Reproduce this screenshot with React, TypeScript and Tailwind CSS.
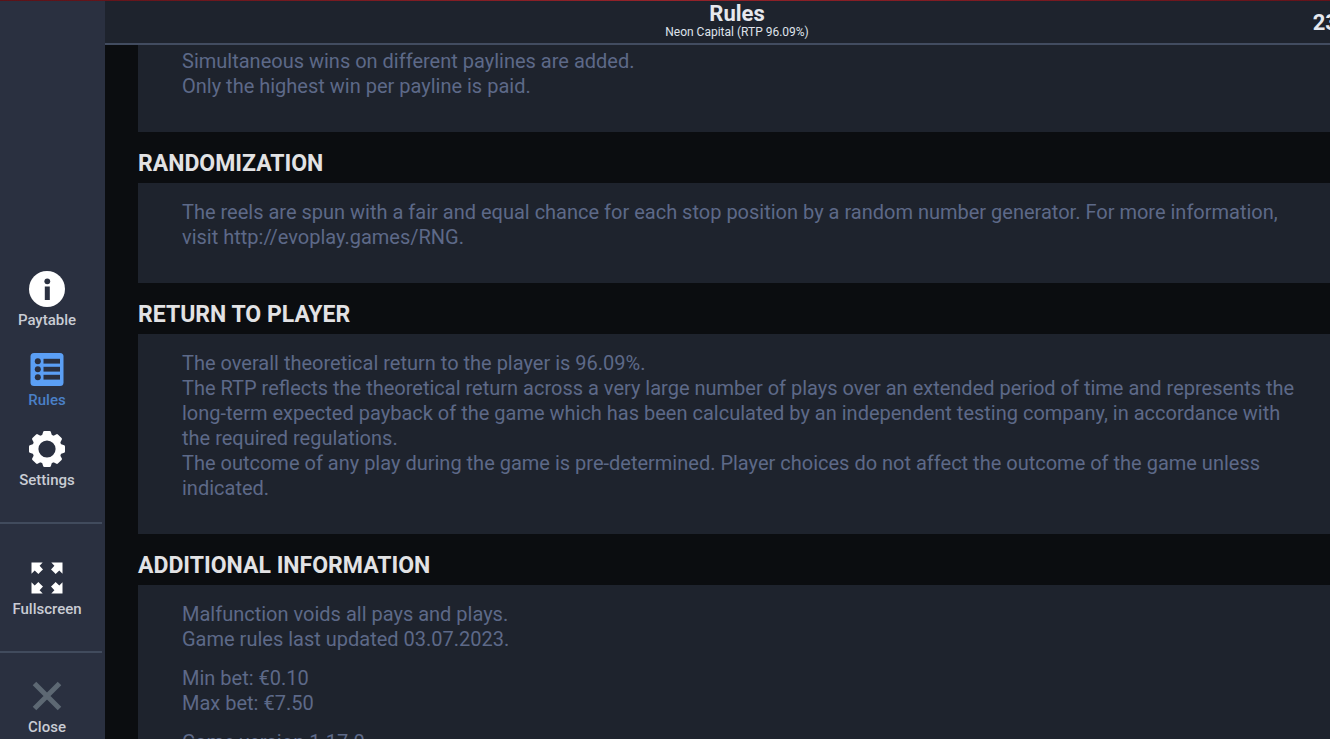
import React from "react";
import type { ReactNode } from "react";

const InfoIcon = () => (
  <svg width="36" height="36" viewBox="0 0 36 36" aria-hidden="true">
    <circle cx="18" cy="18" r="18" fill="#ffffff" />
    <circle cx="18.3" cy="10.3" r="2.9" fill="#2a3040" />
    <rect x="15.8" y="15.5" width="5" height="13.5" fill="#2a3040" />
  </svg>
);

const RulesIcon = () => (
  <svg width="34" height="34" viewBox="0 0 34 34" aria-hidden="true">
    <rect x="0.5" y="1" width="33" height="33" rx="3.5" fill="#5b9ff5" />
    <g fill="#2a3040">
      <circle cx="7.8" cy="9.2" r="3" />
      <circle cx="7.8" cy="17.2" r="3" />
      <circle cx="7.8" cy="25.2" r="3" />
      <rect x="13.5" y="6.8" width="16.5" height="4.8" />
      <rect x="13.5" y="14.8" width="16.5" height="4.8" />
      <rect x="13.5" y="22.8" width="16.5" height="4.8" />
    </g>
  </svg>
);

const teeth = [0, 45, 90, 135, 180, 225, 270, 315];

const SettingsIcon = () => (
  <svg width="36" height="36" viewBox="0 0 36 36" aria-hidden="true">
    <circle cx="18" cy="18" r="11.7" fill="none" stroke="#ffffff" strokeWidth="6.2" />
    {teeth.map((angle) => (
      <path
        key={angle}
        d="M12.6 6 L14.2 0.8 Q14.5 0 15.4 0 H20.6 Q21.5 0 21.8 0.8 L23.4 6 Z"
        fill="#ffffff"
        transform={`rotate(${angle} 18 18)`}
      />
    ))}
  </svg>
);

const corners = [0, 90, 180, 270];

const FullscreenIcon = () => (
  <svg width="32" height="32" viewBox="0 0 32 32" aria-hidden="true">
    {corners.map((angle) => (
      <path
        key={angle}
        d="M0.5 0.5 H11.7 L8.6 3.7 L12 7.4 L10.6 8.8 L8.8 10.6 L7.4 12 L3.7 8.6 L0.5 11.7 Z"
        fill="#ffffff"
        transform={`rotate(${angle} 16 16)`}
      />
    ))}
  </svg>
);

const CloseIcon = () => (
  <svg width="30" height="30" viewBox="0 0 30 30" aria-hidden="true">
    <path d="M2.5 2.5 L27.5 27.5 M27.5 2.5 L2.5 27.5" stroke="#5d6873" strokeWidth="5" />
  </svg>
);

type NavButtonProps = {
  icon: ReactNode;
  label: string;
  active?: boolean;
};

const NavButton = ({ icon, label, active }: NavButtonProps) => (
  <button
    type="button"
    className={`flex w-[94px] flex-col items-center gap-[3px] text-[15px] leading-5 font-medium ${
      active ? "text-[#4a80c8]" : "text-[#c9ccd4]"
    }`}
  >
    <span className="flex h-9 items-center justify-center">{icon}</span>
    {label}
  </button>
);

const Divider = () => <hr className="w-[102px] border-t-2 border-[#414b5d]" />;

type SectionProps = {
  title: string;
  children: ReactNode;
};

const Section = ({ title, children }: SectionProps) => (
  <section>
    <h2 className="pt-[18px] pb-[5px] text-[23px] leading-7 font-bold text-[#e2e2e4]">{title}</h2>
    <div className="bg-[#1e232d] pt-[17px] pb-[33px] pl-11">{children}</div>
  </section>
);

export default function App() {
  return (
    <div className="flex h-screen flex-col overflow-hidden bg-[#0b0d10] font-['Roboto',sans-serif]">
      <div className="h-px shrink-0 bg-linear-to-r from-[#5c1218] via-[#96232a] to-[#64131a]" />
      <div className="flex min-h-0 flex-1">
        <nav className="flex w-[105px] shrink-0 flex-col justify-end bg-[#2a3040] pb-0.5">
          <div className="flex flex-col gap-[21px] pb-8">
            <NavButton icon={<InfoIcon />} label="Paytable" />
            <NavButton icon={<RulesIcon />} label="Rules" active />
            <NavButton icon={<SettingsIcon />} label="Settings" />
          </div>
          <Divider />
          <div className="pt-9 pb-8">
            <NavButton icon={<FullscreenIcon />} label="Fullscreen" />
          </div>
          <Divider />
          <div className="pt-[25px]">
            <NavButton icon={<CloseIcon />} label="Close" />
          </div>
        </nav>

        {/* the panel runs a little past the right edge of the window */}
        <div className="flex w-[calc(100%-66px)] shrink-0 flex-col">
          <header className="grid h-11 shrink-0 grid-cols-[1fr_auto_1fr] items-center border-b-2 border-[#424c60] bg-[#1e232d]">
            <span />
            <div className="pt-px pb-[5px] text-center">
              <h1 className="text-[22px] leading-6 font-bold text-[#e6e8ee]">Rules</h1>
              <p className="text-xs leading-3 text-[#dfe2ea]">Neon Capital (RTP 96.09%)</p>
            </div>
            <span className="pr-[31px] text-right text-[22px] font-bold text-[#e6e8ee]">23</span>
          </header>

          <main className="min-h-0 flex-1 overflow-hidden pl-[33px] text-[20px] leading-[25px] text-[#5d6988]">
            <div className="bg-[#1e232d] pt-1 pb-[33px] pl-11">
              <p>Simultaneous wins on different paylines are added.</p>
              <p>Only the highest win per payline is paid.</p>
            </div>

            <Section title="RANDOMIZATION">
              <p>
                The reels are spun with a fair and equal chance for each stop position by a random
                number generator. For more information,
                <br />
                visit http://evoplay.games/RNG.
              </p>
            </Section>

            <Section title="RETURN TO PLAYER">
              <p>The overall theoretical return to the player is 96.09%.</p>
              <p>
                The RTP reflects the theoretical return across a very large number of plays over an
                extended period of time and represents the
                <br />
                long-term expected payback of the game which has been calculated by an independent
                testing company, in accordance with
                <br />
                the required regulations.
              </p>
              <p>
                The outcome of any play during the game is pre-determined. Player choices do not
                affect the outcome of the game unless
                <br />
                indicated.
              </p>
            </Section>

            <Section title="ADDITIONAL INFORMATION">
              <p>Malfunction voids all pays and plays.</p>
              <p>Game rules last updated 03.07.2023.</p>
              <p className="pt-3.5">Min bet: €0.10</p>
              <p>Max bet: €7.50</p>
              <p className="pt-3.5">Game version 1.17.0</p>
            </Section>
          </main>
        </div>
      </div>
    </div>
  );
}
